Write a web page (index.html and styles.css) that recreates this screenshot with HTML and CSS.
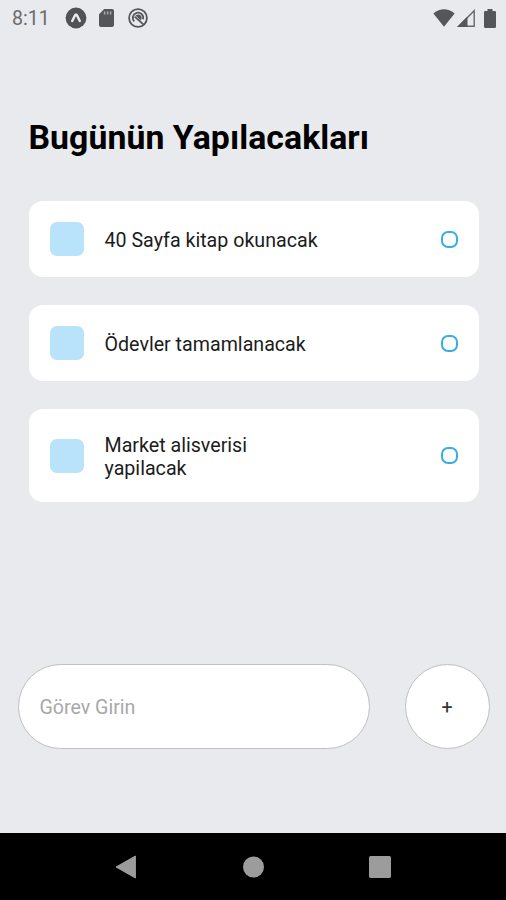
FILE: index.html
```html
<!DOCTYPE html>
<html lang="tr">
<head>
<meta charset="utf-8">
<title>Bugünün Yapılacakları</title>
<link rel="stylesheet" href="styles.css">
</head>
<body>
<div class="screen">
  <header class="status">
    <span class="clock">8:11</span>
    <svg class="status-expo" width="22" height="22" viewBox="0 0 22 22"><circle cx="11" cy="11" r="10.4" fill="#515254"/><path d="M7.2 14 10 8.4Q11 6.6 12 8.4L14.8 14" fill="none" stroke="#e8eaed" stroke-width="2.4" stroke-linecap="round"/></svg>
    <svg class="status-sd" width="15" height="18" viewBox="0 0 15 18"><path d="M5.2 0H13Q15 0 15 2V16Q15 18 13 18H2Q0 18 0 16V5.2Z" fill="#555658"/><path d="M5.6 2.5V5.5M8.6 2.5V5.5M11.6 2.5V5.5" stroke="#a9abad" stroke-width="1.5"/></svg>
    <svg class="status-sync" width="20" height="20" viewBox="0 0 20 20"><circle cx="10" cy="10" r="8.9" fill="none" stroke="#555658" stroke-width="1.8"/><path d="M6.2 13.4A5.2 5.2 0 1 1 15 11.2" fill="none" stroke="#555658" stroke-width="1.8"/><path d="M7.4 7.4Q11.6 5.4 13.4 8.4Q13.8 10.4 12.9 12.4Z" fill="#555658"/><path d="M6.6 8.6 15.4 16.4" stroke="#555658" stroke-width="1.8"/></svg>
    <svg class="status-wifi" width="22" height="18" viewBox="0 0 22 18"><path d="M.4 4.5Q11-3.8 21.6 4.5L11 17.7Z" fill="#555658"/></svg>
    <svg class="status-signal" width="18" height="18" viewBox="0 0 18 18"><path d="M1.7 17.2H17.2V1.7Z" fill="none" stroke="#66676a" stroke-width="1.4"/><path d="M0 18 10.5 7.5V18Z" fill="#555658"/></svg>
    <svg class="status-battery" width="12" height="19" viewBox="0 0 12 19"><path d="M3.5 0H8.5V2H10.7Q12 2 12 3.3V17.7Q12 19 10.7 19H1.3Q0 19 0 17.7V3.3Q0 2 1.3 2H3.5Z" fill="#555658"/></svg>
  </header>

  <main class="tasks">
    <h1 class="title">Bugünün Yapılacakları</h1>
    <ul class="list">
      <li class="item"><span class="square"></span><span class="text">40 Sayfa kitap okunacak</span><span class="ring"></span></li>
      <li class="item"><span class="square"></span><span class="text">Ödevler tamamlanacak</span><span class="ring"></span></li>
      <li class="item"><span class="square"></span><span class="text">Market alisverisi<br>yapilacak</span><span class="ring"></span></li>
    </ul>
  </main>

  <form class="entry">
    <input class="field" type="text" placeholder="Görev Girin" aria-label="Görev Girin">
    <button class="add" type="button">+</button>
  </form>

  <nav class="navbar">
    <svg width="22" height="24" viewBox="0 0 22 24"><path d="M1 12 20.4 1V23Z" fill="#9c9c9c" stroke="#9c9c9c" stroke-linejoin="round"/></svg>
    <svg width="22" height="22" viewBox="0 0 22 22"><circle cx="11.5" cy="11" r="10.5" fill="#9c9c9c"/></svg>
    <svg width="22" height="22" viewBox="0 0 22 22"><rect width="22" height="22" rx="1.7" fill="#9c9c9c"/></svg>
  </nav>
</div>
</body>
</html>
```

FILE: styles.css
```css
* {
  box-sizing: border-box;
}

body {
  margin: 0;
  font-family: Roboto, "Liberation Sans", sans-serif;
  color: #000;
}

.screen {
  display: flex;
  flex-direction: column;
  width: 506px;
  height: 900px;
  background: #e8eaed;
}

svg {
  display: block;
  flex: none;
}

.status {
  display: flex;
  align-items: center;
  height: 36px;
  padding: 0 10px 0 12px;
}

.clock {
  width: 53px;
  font-size: 19.5px;
  color: #6a6b6e;
}

.status-sd {
  margin-left: 12px;
}

.status-sync {
  margin-left: 14px;
}

.status-wifi {
  margin-left: auto;
}

.status-signal {
  margin-left: 2px;
}

.status-battery {
  margin-left: 9px;
}

.tasks {
  padding: 82px 28px 0 28.5px;
}

.title {
  margin: 0;
  font-size: 33.8px;
  line-height: 40px;
  font-weight: 700;
  white-space: nowrap;
  letter-spacing: 0.05px;
}

.list {
  display: flex;
  flex-direction: column;
  gap: 28px;
  margin: 43px 0 0;
  padding: 0;
  list-style: none;
}

.item {
  display: flex;
  align-items: center;
  width: 450px;
  min-height: 76px;
  padding: 21px 20.5px 21px 21px;
  background: #fff;
  border-radius: 14px;
}

.item:last-child {
  min-height: 93px;
}

.square {
  width: 34px;
  height: 34px;
  margin-right: 21px;
  background: #b9e3fb;
  border-radius: 7px;
}

.text {
  padding-top: 2px;
  font-size: 19.65px;
  line-height: 23px;
  color: #1c1c1c;
}

.ring {
  width: 17px;
  height: 17px;
  margin-left: auto;
  border: 2.5px solid #36aee6;
  border-radius: 7px;
}

.entry {
  display: flex;
  justify-content: space-between;
  margin: auto 16px 84px 18px;
}

.field,
.add {
  height: 85px;
  border: 1px solid #c0c0c0;
  background: #fff;
  font-family: inherit;
}

.field {
  width: 352px;
  padding: 2px 20.5px 0;
  border-radius: 43px;
  font-size: 19.6px;
}

.field::placeholder {
  color: #a8a8a8;
}

.add {
  width: 85px;
  padding: 2px 1px 0 0;
  border-radius: 50%;
  font-size: 19.7px;
  color: #333;
}

.navbar {
  display: flex;
  align-items: center;
  justify-content: space-between;
  height: 67px;
  padding: 0 115px;
  background: #000;
}
```
